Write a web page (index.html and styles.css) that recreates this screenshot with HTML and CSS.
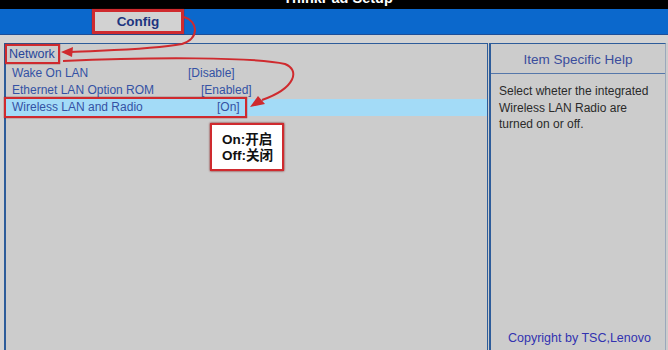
FILE: index.html
```html
<!DOCTYPE html>
<html lang="zh-CN">
<head>
    <meta charset="UTF-8">
    <title>ThinkPad Setup - Config</title>
    <link rel="stylesheet" href="styles.css">
</head>
<body>
    <div class="titlebar">
        <div class="title">ThinkPad Setup</div>
    </div>

    <nav class="menubar">
        <div class="tab tab-active">Config</div>
    </nav>

    <main class="screen">
        <section class="settings">
            <div class="section-title">Network</div>
            <div class="row">
                <span class="label">Wake On LAN</span>
                <span class="value">[Disable]</span>
            </div>
            <div class="row">
                <span class="label">Ethernet LAN Option ROM</span>
                <span class="value value-enabled">[Enabled]</span>
            </div>
            <div class="row row-selected">
                <span class="label">Wireless LAN and Radio</span>
                <span class="value value-on">[On]</span>
            </div>
        </section>

        <aside class="help">
            <div class="help-title">Item Specific Help</div>
            <p class="help-text">Select wheter the integrated Wireless LAN Radio are turned on or off.</p>
            <div class="copyright">Copyright by TSC,Lenovo</div>
        </aside>
    </main>

    <!-- пометки поверх скриншота -->
    <div class="note">
        <div>On:开启</div>
        <div>Off:关闭</div>
    </div>

    <svg class="arrows" width="668" height="350" viewBox="0 0 668 350">
        <path d="M184,17 C198,21 200,38 182,44 C150,50 105,50 70,52" />
        <polygon points="61,52 73,47 72,57" />
        <path d="M63,61 C150,57 255,57 285,64 C300,70 296,88 262,100" />
        <polygon points="250,107 258,96 265,104" />
    </svg>
</body>
</html>
```

FILE: styles.css
```css
body {
    margin: 0;
    width: 668px;
    height: 350px;
    overflow: hidden;
    position: relative;
    background-color: #d3d3d3;
    font-family: 'Liberation Sans', Arial, sans-serif;
    color: #3452a4;
}

.titlebar {
    height: 9px;
    background-color: #000;
    overflow: hidden;
    text-align: center;
}

.title {
    margin-top: -10px;
    padding-left: 8px;
    color: #fff;
    font-weight: bold;
    font-size: 14.5px;
    line-height: 17px;
}

.menubar {
    height: 25px;
    background-color: #0b68cc;
    border-bottom: 1px solid #1d4f98;
    display: flex;
    padding-left: 92px;
}

.tab {
    width: 86px;
    height: 19px;
    text-align: center;
    font-weight: bold;
    font-size: 13.5px;
    line-height: 19px;
    color: #1d3580;
}

.tab-active {
    background-color: #d2d2d2;
    border: 3px solid #cf2a2e;
    box-shadow: 0 0 1px #7a1010;
}

.screen {
    display: flex;
    gap: 1px;
    margin: 8px 0 0 4px;
    height: 307px;
    background-color: #cccccc;
}

.settings {
    width: 481px;
    border-left: 2px solid #2d5c9a;
    border-right: 1px solid #2d5c9a;
    border-top: 1px solid #2d5c9a;
    font-size: 12px;
}

.section-title {
    display: inline-block;
    margin: 0 0 1px -1px;
    padding: 0 3px 0 2px;
    height: 16px;
    line-height: 16px;
    font-size: 12.5px;
    color: #27479a;
    border: 2px solid #cf2a2e;
    box-shadow: 0 0 1px #7a1010;
}

.row {
    display: grid;
    grid-template-columns: 176px auto;
    height: 17px;
    line-height: 17px;
    padding-left: 6px;
}

.value-enabled {
    margin-left: 13px;
}

.value-on {
    margin-left: 29px;
}

.row-selected {
    background-color: #a3dbf7;
    position: relative;
}

.row-selected::before {
    content: "";
    position: absolute;
    left: -2px;
    top: -2px;
    width: 239px;
    height: 17px;
    border: 2px solid #cf2a2e;
    box-shadow: 0 0 1px #7a1010;
}

.help {
    flex: 1;
    display: flex;
    flex-direction: column;
    border-left: 2px solid #2d5c9a;
    border-right: 1px solid #9aa8bc;
    border-top: 1px solid #2d5c9a;
    margin-right: 2px;
}

.help-title {
    height: 29px;
    line-height: 32px;
    text-align: center;
    font-size: 13.5px;
    color: #3a4c9c;
    border-bottom: 1px solid #5577aa;
}

.help-text {
    margin: 9px 4px 0 8px;
    font-size: 12px;
    line-height: 16.5px;
    color: #2a2a2a;
}

.copyright {
    margin-top: auto;
    margin-bottom: 5px;
    padding-left: 17px;
    font-size: 12.5px;
    color: #3232b0;
}

.note {
    position: absolute;
    left: 210px;
    top: 123px;
    width: 60px;
    height: 37px;
    padding: 7px 0 0 10px;
    background-color: #fff;
    border: 2px solid #cf2a2e;
    box-shadow: 0 0 2px #7a1010;
    font-family: 'Liberation Sans', 'Noto Sans CJK SC', sans-serif;
    font-weight: bold;
    font-size: 13.5px;
    line-height: 16px;
    color: #111;
}

.arrows {
    position: absolute;
    left: 0;
    top: 0;
    pointer-events: none;
}

.arrows path {
    fill: none;
    stroke: #cf2a2e;
    stroke-width: 2;
}

.arrows polygon {
    fill: #cf2a2e;
}
```
